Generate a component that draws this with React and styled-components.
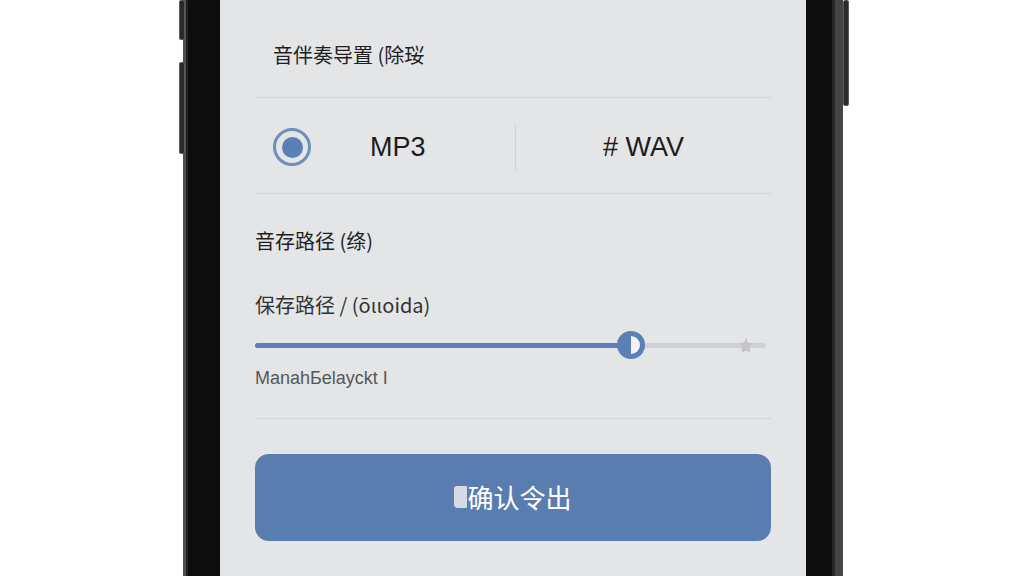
import React from 'react';
import styled, { createGlobalStyle } from 'styled-components';

const GlobalStyle = createGlobalStyle`
    html, body {
        margin: 0;
        padding: 0;
        background: #ffffff;
    }
    body {
        font-family: "Liberation Sans", "Noto Sans CJK SC", sans-serif;
    }
`;

// whole photographed area
const Stage = styled.div`
    width: 1024px;
    height: 576px;
    overflow: hidden;
    display: flex;
    padding-left: 183px;
    box-sizing: border-box;
    background: #ffffff;
`;

// dark phone body with its metal rims
const Phone = styled.div`
    position: relative;
    display: flex;
    height: 576px;
    background: #0d0d0d;
    padding: 0 29px 0 34px;
    border-left: 3px solid #4f4f4f;
    border-right: 8px solid #454545;
    box-shadow: inset 2px 0 0 #222, inset -3px 0 0 #262626;
`;

// side keys sit over the rim
const SideKey = styled.span`
    position: absolute;
    top: ${p => p.top}px;
    height: ${p => p.h}px;
    width: 4px;
    background: #2b2b2b;
    border: 1px solid #5a5a5a;
    border-radius: 2px;
    ${p => (p.right ? 'right: -14px;' : 'left: -7px;')}
`;

const Screen = styled.div`
    width: 586px;
    background: #e4e5e7;
    padding: 0 35px;
    box-sizing: border-box;
    display: flex;
    flex-direction: column;
`;

const TitleRow = styled.div`
    height: 97px;
    display: flex;
    align-items: center;
    padding: 11px 0 0 18px;
    box-sizing: border-box;
    font-family: "Noto Sans CJK SC", "Liberation Sans", sans-serif;
    font-size: 20px;
    color: #1f1f1f;
`;

const Divider = styled.div`
    height: 1px;
    background: #d3d4d7;
    flex-shrink: 0;
`;

const OptionRow = styled.div`
    height: 95px;
    padding-top: 3px;
    box-sizing: border-box;
    display: grid;
    grid-template-columns: 260px 1px 1fr;
    align-items: center;
`;

const OptionCell = styled.div`
    display: flex;
    align-items: center;
    justify-content: ${p => (p.center ? 'center' : 'flex-start')};
    padding-left: ${p => (p.center ? 0 : 18)}px;
    gap: 59px;
    font-size: 27px;
    color: #1c1c1c;
`;

const Radio = styled.span`
    width: 38px;
    height: 38px;
    border-radius: 50%;
    border: 3px solid #6e8fbb;
    box-sizing: border-box;
    display: flex;
    align-items: center;
    justify-content: center;

    &::after {
        content: '';
        width: 21px;
        height: 21px;
        border-radius: 50%;
        background: #5b80b6;
    }
`;

const VLine = styled.div`
    width: 1px;
    height: 47px;
    background: #cfd1d4;
`;

const Section = styled.div`
    display: flex;
    flex-direction: column;
`;

const Heading = styled.div`
    margin-top: ${p => p.mt}px;
    height: 24px;
    line-height: 24px;
    font-family: "Noto Sans CJK SC", "Liberation Sans", sans-serif;
    font-size: 20px;
    color: ${p => p.color || '#1f1f1f'};
`;

const SliderWrap = styled.div`
    margin-top: 14px;
    height: 28px;
    position: relative;
    display: flex;
    align-items: center;
`;

const Track = styled.div`
    width: 511px;
    height: 5px;
    border-radius: 3px;
    background: #d0d1d3;
    position: relative;
`;

const Fill = styled.div`
    height: 100%;
    border-radius: 3px;
    background: #5b80b6;
`;

const Thumb = styled.span`
    position: absolute;
    top: 50%;
    width: 28px;
    height: 28px;
    margin: -14px 0 0 -14px;
    border-radius: 50%;
    background: #5b80b6;
    display: flex;
    align-items: center;
    justify-content: center;

    &::after {
        content: '';
        width: 9px;
        height: 18px;
        margin-left: 9px;
        border-radius: 0 9px 9px 0;
        background: #f2f3f5;
    }
`;

const Star = styled.svg`
    position: absolute;
    left: 484px;
    top: 6px;
`;

const Caption = styled.div`
    margin-top: 9px;
    height: 20px;
    line-height: 20px;
    font-size: 18px;
    color: #575757;
`;

const Button = styled.button`
    margin-top: 35px;
    height: 87px;
    width: 100%;
    border: none;
    border-radius: 14px;
    background: #5a7daf;
    color: #ffffff;
    font-family: "Noto Sans CJK SC", "Liberation Sans", sans-serif;
    font-size: 26px;
    display: flex;
    align-items: center;
    justify-content: center;
    padding: 0 0 2px 0;
`;

const Tag = styled.span`
    width: 13px;
    height: 22px;
    border-radius: 3px 1px 1px 4px;
    background: #d6dbe3;
`;

const value = 0.735;

const App = () => {
    return (
        <>
            <GlobalStyle />
            <Stage>
                <Phone>
                    <SideKey top={0} h={38} />
                    <SideKey top={62} h={90} />
                    <SideKey right top={0} h={104} />
                    <Screen>
                        <TitleRow>音伴奏导置 (除珱</TitleRow>
                        <Divider />
                        <OptionRow>
                            <OptionCell>
                                <Radio />
                                <span>MP3</span>
                            </OptionCell>
                            <VLine />
                            <OptionCell center>
                                <span>#&nbsp;WAV</span>
                            </OptionCell>
                        </OptionRow>
                        <Divider />
                        <Section>
                            <Heading mt={35}>音存路径 (绦)</Heading>
                            <Heading mt={40} color="#333">保存路径 / (ōιιoida)</Heading>
                            <SliderWrap>
                                <Track>
                                    <Fill style={{ width: `${value * 100}%` }} />
                                    <Thumb style={{ left: `${value * 100}%` }} />
                                </Track>
                                <Star width="14" height="16" viewBox="0 0 16 18">
                                    <path d="M8 0 L10 6 L16 7 L12 11 L13 18 L8 15 L3 18 L4 11 L0 7 L6 6 Z" fill="#c4c5c8" />
                                </Star>
                            </SliderWrap>
                            <Caption>ManahБelayckt I</Caption>
                            <Divider style={{ marginTop: 30 }} />
                            <Button>
                                <Tag />
                                确认令出
                            </Button>
                        </Section>
                    </Screen>
                </Phone>
            </Stage>
        </>
    );
};

export default App;
